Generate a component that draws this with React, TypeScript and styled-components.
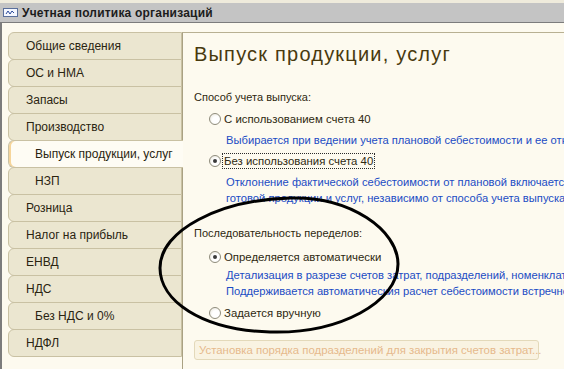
import React from "react";
import styled, { createGlobalStyle } from "styled-components";

const Global = createGlobalStyle`
  html, body { margin: 0; padding: 0; background: #fdfaef; }
  body { font-family: "Liberation Sans", Arial, sans-serif; }
`;

const Window = styled.div`
  position: relative;
  width: 564px;
  height: 369px;
  overflow: hidden;
  background: #fdfaef;
  display: flex;
  flex-direction: column;
`;

const TopStrip = styled.div`
  height: 3px;
  background: #efebdc;
  flex: none;
`;

const TitleBar = styled.div`
  height: 19px;
  flex: none;
  background: #c4c4c4;
  border-bottom: 1px solid #7c7c7c;
  display: flex;
  align-items: center;
  gap: 4px;
  padding-left: 3px;
  font-size: 12px;
  font-weight: bold;
  color: #1c1c1c;
  letter-spacing: 0.2px;
`;

const Frame = styled.div`
  flex: 1;
  display: flex;
  border-left: 2px solid #7c7c7c;
  padding: 9px 0 0 6px;
  min-height: 0;
`;

const TabList = styled.div`
  width: 174px;
  flex: none;
  display: flex;
  flex-direction: column;
`;

const Tab = styled.div<{ $active?: boolean; $sub?: boolean }>`
  height: 28px;
  box-sizing: border-box;
  flex: none;
  margin-top: -1px;
  margin-right: ${(p) => (p.$active ? "-1px" : "0")};
  border: 1px solid #c9c1a3;
  border-right: ${(p) => (p.$active ? "none" : "1px solid #c9c1a3")};
  border-radius: 6px 0 0 6px;
  background: ${(p) => (p.$active ? "#fefcf4" : "#ebe6d0")};
  box-shadow: ${(p) => (p.$active ? "inset 2px 0 0 #f6d59a" : "none")};
  display: flex;
  align-items: center;
  padding-left: ${(p) => (p.$sub ? "26px" : "17px")};
  font-size: 12px;
  color: #2a2410;
  white-space: nowrap;
  position: relative;
  z-index: ${(p) => (p.$active ? 2 : 1)};
  &:first-child { margin-top: 0; }
`;

const Panel = styled.div`
  flex: 1;
  border-left: 1px solid #a9a183;
  border-top: 1px solid #b8b092;
  padding: 8px 0 0 11px;
  display: flex;
  flex-direction: column;
  min-width: 0;
  overflow: hidden;
`;

const Heading = styled.div`
  height: 26px;
  line-height: 26px;
  font-size: 20px;
  letter-spacing: 1.2px;
  color: #48390e;
  white-space: nowrap;
`;

const GroupLabel = styled.div<{ $mt: number }>`
  margin-top: ${(p) => p.$mt}px;
  height: 16px;
  line-height: 16px;
  font-size: 11px;
  color: #2e2810;
  white-space: nowrap;
`;

const RadioRow = styled.div<{ $mt: number }>`
  margin-top: ${(p) => p.$mt}px;
  margin-left: 15px;
  height: 16px;
  display: flex;
  align-items: center;
  gap: 2px;
  font-size: 11.4px;
  color: #2e2810;
  white-space: nowrap;
`;

const RadioCircle = styled.span<{ $checked?: boolean }>`
  width: 12px;
  height: 12px;
  box-sizing: border-box;
  border-radius: 50%;
  border: 1px solid #8f8c7c;
  background: radial-gradient(circle at 60% 60%, #ffffff 40%, #e4e1d4 100%);
  display: flex;
  align-items: center;
  justify-content: center;
  flex: none;
  &::after {
    content: "";
    width: 4px;
    height: 4px;
    border-radius: 50%;
    background: ${(p) => (p.$checked ? "#3a3a3a" : "transparent")};
  }
`;

const RadioText = styled.span<{ $focused?: boolean }>`
  line-height: 14px;
  padding: 0 1px;
  outline: ${(p) => (p.$focused ? "1px dotted #2a2a2a" : "none")};
`;

const Hint = styled.div<{ $mt: number }>`
  margin-top: ${(p) => p.$mt}px;
  margin-left: 32px;
  font-size: 11.2px;
  line-height: 16px;
  color: #1b4cc4;
  white-space: nowrap;
`;

const ActionButton = styled.button`
  margin-top: 19px;
  width: 345px;
  height: 20px;
  flex: none;
  box-sizing: border-box;
  border: 1px solid #e3d9ba;
  border-radius: 3px;
  background: #f9f3e2;
  color: #e6b98c;
  font-family: "Liberation Sans", Arial, sans-serif;
  font-size: 11.4px;
  text-align: left;
  padding: 0 0 0 4px;
  white-space: nowrap;
`;

const Ellipse = styled.svg`
  position: absolute;
  left: 150px;
  top: 190px;
  z-index: 5;
  pointer-events: none;
`;

const TitleIcon = () => (
  <svg width="15" height="9" viewBox="0 0 15 9">
    <rect x="0.5" y="0.5" width="14" height="8" fill="#f4f7ff" stroke="#5a6f9c" />
    <path d="M3 6 L5 3 L7 6 L9 3 L11 5" fill="none" stroke="#2a4a9a" strokeWidth="1" />
  </svg>
);

const tabs: { label: string; sub?: boolean; active?: boolean }[] = [
  { label: "Общие сведения" },
  { label: "ОС и НМА" },
  { label: "Запасы" },
  { label: "Производство" },
  { label: "Выпуск продукции, услуг", sub: true, active: true },
  { label: "НЗП", sub: true },
  { label: "Розница" },
  { label: "Налог на прибыль" },
  { label: "ЕНВД" },
  { label: "НДС" },
  { label: "Без НДС и 0%", sub: true },
  { label: "НДФЛ" },
];

export default function App() {
  return (
    <>
      <Global />
      <Window>
        <TopStrip />
        <TitleBar>
          <TitleIcon />
          <span>Учетная политика организаций</span>
        </TitleBar>
        <Frame>
          <TabList>
            {tabs.map((t) => (
              <Tab key={t.label} $active={t.active} $sub={t.sub}>
                {t.label}
              </Tab>
            ))}
          </TabList>
          <Panel>
            <Heading>Выпуск продукции, услуг</Heading>
            <GroupLabel $mt={22}>Способ учета выпуска:</GroupLabel>
            <RadioRow $mt={6}>
              <RadioCircle />
              <RadioText>С использованием счета 40</RadioText>
            </RadioRow>
            <Hint $mt={5}>Выбирается при ведении учета плановой себестоимости и ее отклонений</Hint>
            <RadioRow $mt={5}>
              <RadioCircle $checked />
              <RadioText $focused>Без использования счета 40</RadioText>
            </RadioRow>
            <Hint $mt={5}>
              Отклонение фактической себестоимости от плановой включается в себестоимость
              <br />
              готовой продукции и услуг, независимо от способа учета выпуска.
            </Hint>
            <GroupLabel $mt={19}>Последовательность переделов:</GroupLabel>
            <RadioRow $mt={8}>
              <RadioCircle $checked />
              <RadioText>Определяется автоматически</RadioText>
            </RadioRow>
            <Hint $mt={2}>
              Детализация в разрезе счетов затрат, подразделений, номенклатурных групп
              <br />
              Поддерживается автоматическия расчет себестоимости встречного выпуска
            </Hint>
            <RadioRow $mt={6}>
              <RadioCircle />
              <RadioText>Задается вручную</RadioText>
            </RadioRow>
            <ActionButton disabled>
              Установка порядка подразделений для закрытия счетов затрат...
            </ActionButton>
          </Panel>
        </Frame>
        <Ellipse width="260" height="160" viewBox="0 0 260 160">
          <path
            d="M140 8 C 200 6, 248 40, 248 74 C 248 112, 190 144, 120 142 C 50 140, 10 110, 10 78 C 10 40, 70 10, 140 8 Z"
            fill="none"
            stroke="#000"
            strokeWidth="3"
          />
        </Ellipse>
      </Window>
    </>
  );
}
